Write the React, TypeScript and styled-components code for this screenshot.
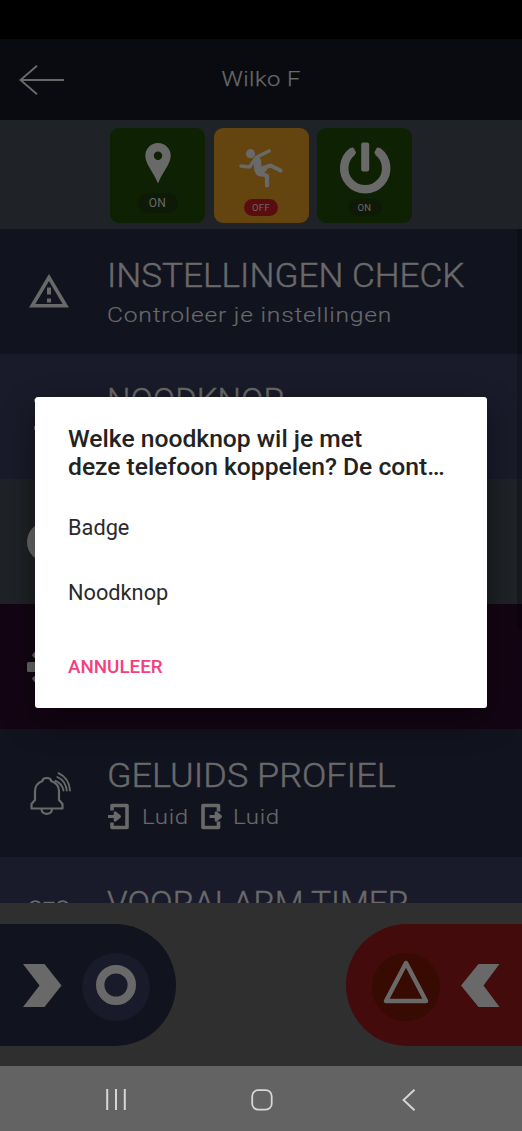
import React from "react";
import styled, { createGlobalStyle } from "styled-components";

const Global = createGlobalStyle`
  *, *::before, *::after { box-sizing: border-box; }
  html, body { margin: 0; background: #000; }
  svg { display: block; flex: none; overflow: visible; }
`;

const ink = "#69696a";

const Screen = styled.div`
  position: relative;
  width: 522px;
  height: 1131px;
  overflow: hidden;
  display: flex;
  flex-direction: column;
  font-family: Roboto, "Liberation Sans", sans-serif;
  color: ${ink};
`;

const StatusBar = styled.div`
  flex: none;
  height: 39px;
  background: #000;
`;

const Header = styled.header`
  flex: none;
  height: 81px;
  padding: 0 19px;
  display: grid;
  grid-template-columns: 46px 1fr 46px;
  align-items: center;
  background: #0a0b10;
`;

const Stretch = styled.span<{ $x?: number; $s?: number; $center?: boolean }>`
  display: inline-block;
  white-space: nowrap;
  letter-spacing: ${(p) => p.$s ?? 0}px;
  transform: scaleX(${(p) => p.$x ?? 1});
  transform-origin: ${(p) => (p.$center ? "50%" : "0")} 50%;
`;

const HeaderTitle = styled.h1`
  margin: 0 0 1px;
  font-size: 20.5px;
  font-weight: 300;
  -webkit-text-stroke: 0.25px currentColor;
  text-align: center;
`;

const Tiles = styled.div`
  flex: none;
  height: 109px;
  padding-top: 7.5px;
  display: flex;
  justify-content: center;
  gap: 8.5px;
  background: #1f2226;
`;

const Tile = styled.div<{ $bg: string }>`
  width: 95px;
  height: 95px;
  border-radius: 9px;
  background: ${(p) => p.$bg};
  display: flex;
  flex-direction: column;
  align-items: center;
  justify-content: space-between;
`;

const Pill = styled.span<{ $bg: string; $large?: boolean }>`
  width: ${(p) => (p.$large ? 40 : 34)}px;
  height: ${(p) => (p.$large ? 20 : 16.5)}px;
  margin-bottom: ${(p) => (p.$large ? 10 : 7)}px;
  border-radius: 10px;
  background: ${(p) => p.$bg};
  font-size: ${(p) => (p.$large ? 12 : 9.5)}px;
  letter-spacing: 0.4px;
  display: flex;
  align-items: center;
  justify-content: center;
`;

const List = styled.main`
  flex: none;
  height: 674px;
  overflow: hidden;
  position: relative;
`;

const ScrollTrack = styled.div`
  position: absolute;
  top: 0;
  right: 0;
  width: 5px;
  height: 400px;
  background: rgba(0, 0, 0, 0.22);
`;

const Row = styled.section<{ $bg: string; $h?: number }>`
  height: ${(p) => p.$h ?? 125}px;
  background: ${(p) => p.$bg};
  display: grid;
  grid-template-columns: 107px 1fr;
`;

const IconCell = styled.div<{ $top: number; $left: number }>`
  padding: ${(p) => p.$top}px 0 0 ${(p) => p.$left}px;
`;

const RowText = styled.div`
  padding-top: 27px;
`;

const RowTitle = styled.h2`
  margin: 0;
  font-size: 33px;
  line-height: 40px;
  font-weight: 300;
  -webkit-text-stroke: 0.45px currentColor;
`;

const RowSub = styled.div`
  margin-top: 6px;
  font-size: 20.5px;
  line-height: 26px;
  font-weight: 300;
  -webkit-text-stroke: 0.15px currentColor;
`;

const SoundLine = styled.div`
  display: flex;
  align-items: center;
  height: 27px;
  margin-top: 7px;
  font-size: 20.5px;
  font-weight: 300;
  -webkit-text-stroke: 0.15px currentColor;
`;

const SoundLabel = styled.span<{ $w: number; $pad: number }>`
  width: ${(p) => p.$w}px;
  padding-left: ${(p) => p.$pad}px;
`;

const Footer = styled.footer`
  flex: none;
  height: 163px;
  padding: 21px 0 20px;
  display: flex;
  justify-content: space-between;
  background: #2f2f2f;
`;

const Slider = styled.div<{ $right?: boolean }>`
  width: 176px;
  height: 122px;
  display: flex;
  align-items: center;
  justify-content: space-between;
  padding: ${(p) => (p.$right ? "0 22.5px 0 26px" : "0 26px 0 23px")};
  border-radius: ${(p) => (p.$right ? "61px 0 0 61px" : "0 61px 61px 0")};
  background: ${(p) => (p.$right ? "#430b0b" : "#11131f")};
`;

const Knob = styled.div<{ $bg: string; $lift: number }>`
  width: 68px;
  height: 68px;
  margin-top: 3px;
  padding-bottom: ${(p) => p.$lift}px;
  border-radius: 50%;
  background: ${(p) => p.$bg};
  display: flex;
  align-items: center;
  justify-content: center;
`;

const NavBar = styled.nav`
  flex: none;
  height: 65px;
  padding: 2px 106px 0 106px;
  display: grid;
  grid-template-columns: 145px 1fr 14px;
  align-items: center;
  background: #636363;
`;

const Dialog = styled.div`
  position: absolute;
  left: 35px;
  top: 396.5px;
  width: 452px;
  height: 311.5px;
  padding: 28px 33px 0;
  border-radius: 3px;
  background: #fff;
  color: #222;
  box-shadow: 0 12px 32px rgba(0, 0, 0, 0.45);
`;

const DialogTitle = styled.h3`
  margin: 0;
  font-size: 24.65px;
  line-height: 28.5px;
  font-weight: 500;
  white-space: nowrap;
`;

const Option = styled.div`
  height: 65px;
  display: flex;
  align-items: center;
  font-size: 21.75px;
  color: #2a2a2a;
  &:first-of-type { margin-top: 13px; }
`;

const Cancel = styled.div`
  margin-top: 31px;
  font-size: 18.8px;
  line-height: 22px;
  font-weight: 500;
  color: #f4407f;
`;

const stroke = { fill: "none", stroke: ink } as const;

const PinIcon = () => (
  <svg width="26" height="41" viewBox="0 0 26 41" style={{ marginTop: 15 }}>
    <path fill={ink} fillRule="evenodd" d="M13 0A12.7 12.7 0 0 0 .3 12.7C.3 21 8 28 13 40.500 18 28 25.700 21 25.700 12.700A12.700 12.700 0 0 0 13 0ZM13 8.500a4.200 4.200 0 1 1 0 8.400a4.200 4.200 0 0 1 0-8.400Z" />
  </svg>
);

const FallIcon = () => (
  <svg width="44" height="40" viewBox="0 0 44 40" style={{ marginTop: 21.5 }}>
    <circle cx="11.500" cy="4.700" r="4.600" fill={ink} />
    <g {...stroke} strokeLinecap="round" strokeLinejoin="round">
      <path d="M30 2 17 8.500" strokeWidth="3.600" />
      <path d="M2 17 10.500 18 15 11.500" strokeWidth="3.400" />
      <path d="M23 19.500 31.500 16.500 41.500 21.500" strokeWidth="4" />
      <path d="M20 23.500 28 27V36.500" strokeWidth="4.200" />
    </g>
    <path fill={ink} d="M14 9 20 7.500 22 11 22.500 18 28 17.500 28 21 25 24 29 27 21 27.500Q15.500 26 15 19Z" />
  </svg>
);

const PowerIcon = () => (
  <svg width="52" height="52" viewBox="0 0 52 52" style={{ marginTop: 14.5 }}>
    <path {...stroke} strokeWidth="8.500" d="M13.700 9.400A21 21 0 1 0 38.700 9.400" />
    <path {...stroke} fill={ink} strokeWidth="2" strokeLinejoin="round" d="M12 7 13.800 6.500 16 10.500 15 12ZM40.400 7 38.600 6.500 36.400 10.500 37.400 12Z" />
    <rect x="22.200" y="0.500" width="8" height="29" rx="2" fill={ink} />
  </svg>
);

const WarningIcon = () => (
  <svg width="40" height="34" viewBox="0 0 40 34">
    <path {...stroke} strokeWidth="3.600" d="M20 3.500 3.200 31.800H36.800Z" />
    <path {...stroke} strokeWidth="4" d="M20 13.500v7M20 24.500v4" />
  </svg>
);

const BellIcon = () => (
  <svg width="42" height="44" viewBox="0 0 42 44">
    <g {...stroke} strokeWidth="2.200" strokeLinejoin="round" strokeLinecap="round">
      <path d="M1.500 36.500V32L5 28V19C5 13 8.500 10.500 12.500 9C12.500 5 21 5 21 9C25.500 10.500 29 13 29 19V28L32.500 32V36.500Z" />
      <path d="M11.500 37C11.500 43.500 22 43.500 22 37" />
      <path d="M25.500 8.800C30 10.500 32.500 13.500 33.500 18.500M28.500 1.200C35.500 4.500 39.500 10 40 18.500M27.300 5C33 7.500 36 12 36.800 18.500" strokeWidth="1.900" />
    </g>
  </svg>
);

const SoundIcon = ({ out }: { out?: boolean }) => (
  <svg width="22" height="27" viewBox="0 0 22 27">
    {out ? (
      <g {...stroke} strokeWidth="3.600" strokeLinejoin="round">
        <path d="M17.500 8.500V2.500H2V24.500H17.500V18.500" />
        <path d="M8.500 13.500H18M15.200 9.800 19.500 13.500 15.200 17.200Z" strokeWidth="3" />
      </g>
    ) : (
      <g {...stroke} strokeWidth="3.600" strokeLinejoin="round">
        <path d="M5 7.500V2.500H20V24.500H5V19.500" />
        <path d="M1 13.500H11M8.200 9.800 12.500 13.500 8.200 17.200Z" strokeWidth="3" />
      </g>
    )}
  </svg>
);

const GearIcon = () => (
  <svg width="46" height="46" viewBox="0 0 46 46">
    <circle cx="23" cy="23" r="11.500" fill="none" stroke={ink} strokeWidth="7" />
    <g fill={ink}>
      {[0, 40, 90, 140, 180, 220, 270, 320].map((a) => (
        <rect key={a} x={a % 90 ? 1.500 : 0} y={a % 90 ? 20 : 18} width="11" height={a % 90 ? 6 : 10} rx="1.500" transform={`rotate(${a} 23 23)`} />
      ))}
    </g>
  </svg>
);

const Chevron = ({ flip }: { flip?: boolean }) => (
  <svg width="39" height="43" viewBox="0 0 39 43">
    <path fill={ink} d={flip ? "M38.500 0H17.500L0 21.500 17.500 43H38.500L22.500 21.500Z" : "M0 0H21.500L38.500 21.500 21.500 43H0L16.500 21.500Z"} />
  </svg>
);

export default function App() {
  return (
    <Screen>
      <Global />
      <StatusBar />
      <Header>
        <svg width="46" height="30" viewBox="0 0 46 30" {...stroke} strokeWidth="1.900">
          <path d="M1.500 15H45M18 .8 1.500 15 18 29.200" />
        </svg>
        <HeaderTitle><Stretch $x={1.16} $s={0.4} $center>Wilko F</Stretch></HeaderTitle>
      </Header>
      <Tiles>
        <Tile $bg="#0e2102"><PinIcon /><Pill $bg="#0e1a07" $large>ON</Pill></Tile>
        <Tile $bg="#65450f"><FallIcon /><Pill $bg="#5b0c10">OFF</Pill></Tile>
        <Tile $bg="#0e2102"><PowerIcon /><Pill $bg="#0e1a07">ON</Pill></Tile>
      </Tiles>
      <List>
        <Row $bg="#11131f">
          <IconCell $top={45} $left={29}><WarningIcon /></IconCell>
          <RowText>
            <RowTitle><Stretch $x={1.064}>INSTELLINGEN CHECK</Stretch></RowTitle>
            <RowSub><Stretch $x={1.2} $s={0.65}>Controleer je instellingen</Stretch></RowSub>
          </RowText>
        </Row>
        <Row $bg="#191b2a">
          <IconCell $top={45} $left={33}>
            <svg width="30" height="40" viewBox="0 0 30 40" {...stroke} strokeWidth="1"><path d="M1.500 0V3M1.500 27V31" /></svg>
          </IconCell>
          <RowText><RowTitle><Stretch $x={1}>NOODKNOP</Stretch></RowTitle></RowText>
        </Row>
        <Row $bg="#1f2226">
          <IconCell $top={43} $left={27}>
            <svg width="40" height="40" viewBox="0 0 40 40"><circle cx="20" cy="20" r="20" fill={ink} /></svg>
          </IconCell>
        </Row>
        <Row $bg="#140514">
          <IconCell $top={40} $left={27}><GearIcon /></IconCell>
        </Row>
        <Row $bg="#11131f" $h={128}>
          <IconCell $top={43} $left={30}><BellIcon /></IconCell>
          <RowText>
            <RowTitle><Stretch $x={1.09}>GELUIDS PROFIEL</Stretch></RowTitle>
            <SoundLine>
              <SoundIcon />
              <SoundLabel $w={71.5} $pad={13}><Stretch $x={1.17} $s={0.6}>Luid</Stretch></SoundLabel>
              <SoundIcon out />
              <SoundLabel $w={72} $pad={10}><Stretch $x={1.17} $s={0.6}>Luid</Stretch></SoundLabel>
            </SoundLine>
          </RowText>
        </Row>
        <Row $bg="#191b2a">
          <IconCell $top={43} $left={29}>
            <svg width="40" height="42" viewBox="0 0 40 42" {...stroke} strokeWidth="2">
              <path d="M1 4C4 .5 8 .5 11 3M29 3C32 .5 36 .5 39 4M14.500 2.700H25.500" />
            </svg>
          </IconCell>
          <RowText><RowTitle><Stretch $x={1.012}>VOORALARM TIMER</Stretch></RowTitle></RowText>
        </Row>
        <ScrollTrack />
      </List>
      <Footer>
        <Slider>
          <Chevron />
          <Knob $bg="#191b2a" $lift={3}>
            <svg width="40" height="40" viewBox="0 0 40 40"><circle cx="20" cy="20" r="15.800" {...stroke} strokeWidth="8.400" /></svg>
          </Knob>
        </Slider>
        <Slider $right>
          <Knob $bg="#370a02" $lift={10}>
            <svg width="46" height="44" viewBox="0 0 46 44"><path d="M23 3 3 41H43Z" {...stroke} strokeWidth="4.500" strokeLinejoin="round" /></svg>
          </Knob>
          <Chevron flip />
        </Slider>
      </Footer>
      <NavBar>
        <svg width="20" height="21" viewBox="0 0 20 21" fill="none" stroke="#d6d6d6" strokeWidth="2"><path d="M1.200 0V21M10 0V21M18.800 0V21" /></svg>
        <svg width="22" height="22" viewBox="0 0 22 22" fill="none" stroke="#d6d6d6" strokeWidth="1.800"><rect x="1.200" y="1.200" width="19.500" height="19.500" rx="6" /></svg>
        <svg width="14" height="22" viewBox="0 0 14 22" fill="none" stroke="#d6d6d6" strokeWidth="1.900"><path d="M12.500 .8 1.500 11 12.500 21.200" /></svg>
      </NavBar>
      <Dialog>
        <DialogTitle>Welke noodknop wil je met<br />deze telefoon koppelen? De cont…</DialogTitle>
        <Option>Badge</Option>
        <Option>Noodknop</Option>
        <Cancel>ANNULEER</Cancel>
      </Dialog>
    </Screen>
  );
}
